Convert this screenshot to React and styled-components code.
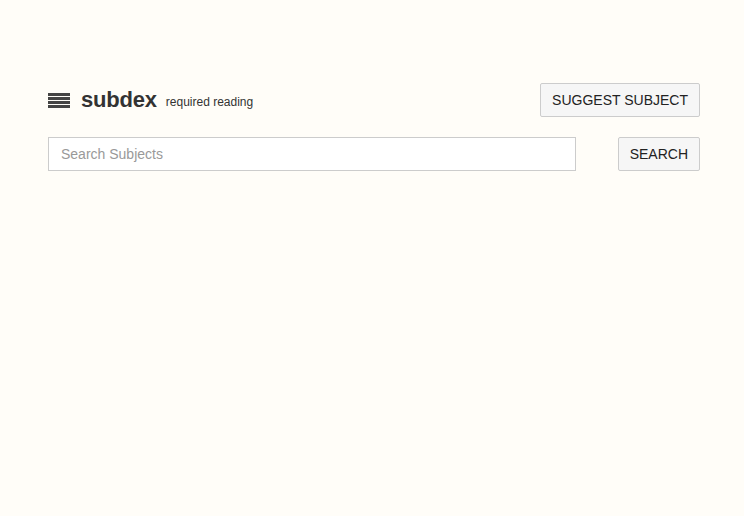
import React from 'react'
import styled, { createGlobalStyle } from 'styled-components'

const GlobalStyle = createGlobalStyle`
  html, body {
    margin: 0;
    padding: 0;
    background: #fffdf8;
  }
  body {
    font-family: "Liberation Sans", Arial, sans-serif;
    color: #333;
  }
`

export default function App() {
  return (
    <Page>
      <GlobalStyle />
      <Header>
        <Brand>
          <MenuIcon>
            <span />
            <span />
            <span />
            <span />
          </MenuIcon>
          <Title>subdex</Title>
          <Tagline>required reading</Tagline>
        </Brand>
        <Button>Suggest Subject</Button>
      </Header>
      <SearchRow>
        <SearchInput placeholder="Search Subjects" />
        <Button>Search</Button>
      </SearchRow>
    </Page>
  )
}

const Page = styled.div`
  width: 700px;
  padding: 83px 0 0 48px;
  min-height: 100vh;
  box-sizing: border-box;
`

const Header = styled.div`
  display: flex;
  align-items: center;
  justify-content: space-between;
  height: 34px;
`

const Brand = styled.div`
  display: flex;
  align-items: center;
`

const MenuIcon = styled.div`
  display: flex;
  flex-direction: column;
  gap: 1px;
  width: 22px;
  margin-right: 11px;
  margin-top: 1px;
  span {
    display: block;
    height: 3px;
    background: #444;
  }
`

const Title = styled.h1`
  margin: 0;
  font-size: 22px;
  font-weight: bold;
  color: #333;
  letter-spacing: -0.2px;
`

const Tagline = styled.span`
  font-size: 12px;
  color: #333;
  margin-left: 9px;
  margin-top: 4px;
`

const Button = styled.button`
  height: 34px;
  padding: 0 11px;
  background: #f6f6f6;
  border: 1px solid #ccc;
  border-radius: 2px;
  font-family: "Liberation Sans", Arial, sans-serif;
  font-size: 14px;
  color: #222;
  text-transform: uppercase;
  cursor: pointer;
`

const SearchRow = styled.div`
  display: flex;
  align-items: center;
  justify-content: space-between;
  margin-top: 20px;
`

const SearchInput = styled.input`
  width: 528px;
  height: 34px;
  box-sizing: border-box;
  border: 1px solid #ccc;
  background: #fff;
  padding: 0 12px;
  font-family: "Liberation Sans", Arial, sans-serif;
  font-size: 14px;
  color: #333;
  outline: none;
  &::placeholder {
    color: #999;
  }
`
